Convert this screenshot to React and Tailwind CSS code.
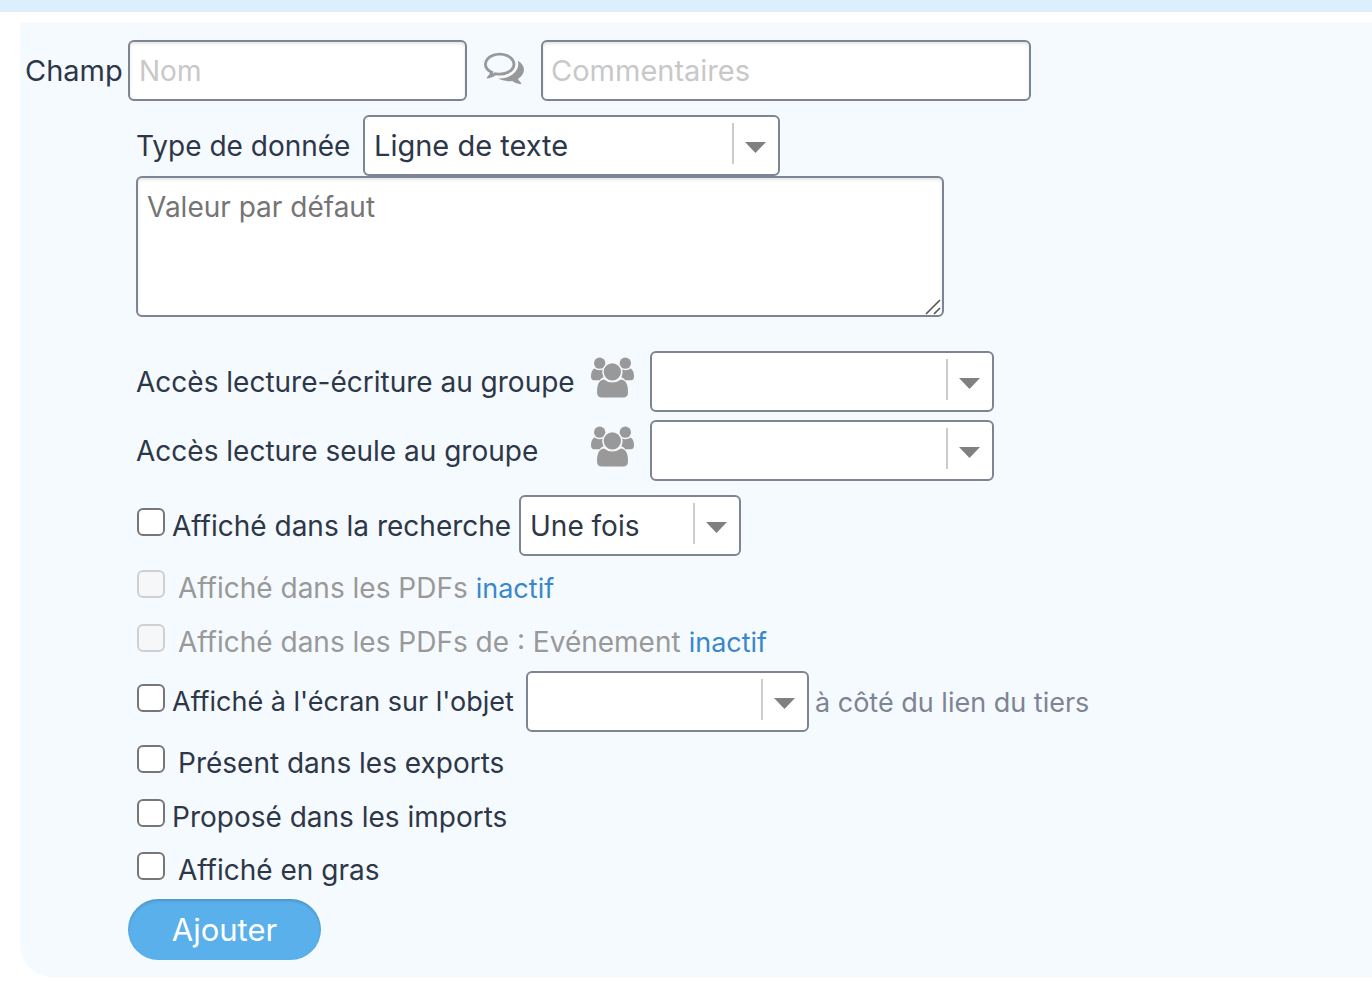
import React, { useState } from "react";

const FIELD = "border-2 border-[#7d8594] rounded-md bg-white text-[#2d3748] focus:outline-none";

function CommentsIcon() {
    return (
        <svg viewBox="0 0 1792 1792" className="w-10 h-10 mb-2 shrink-0" fill="#999999" aria-hidden="true">
            <path d="M704 384q-153 0-286 52t-211.5 141-78.5 191q0 82 53 158t149 132l97 56-35 84q34-20 62-39l44-31 53 10q78 14 153 14 153 0 286-52t211.5-141 78.5-191-78.5-191-211.5-141-286-52zm0-128q191 0 353.5 68.5t256.5 186.5 94 257-94 257-256.5 186.5-353.5 68.5q-86 0-176-16-124 88-278 128-36 9-86 16h-3q-11 0-20.5-8t-11.5-21q-1-3-1-6.5t.5-6.5 2-6l2.5-5 3.5-5.5 4-5 4.5-5 4-4.5q5-6 23-25t26-29.5 22.5-29 25-38.5 20.5-44q-124-72-195-177t-71-224q0-139 94-257t256.5-186.5 353.5-68.5zm822 1169q10 24 20.5 44t25 38.5 22.5 29 26 29.5 23 25q1 1 4 4.5t4.5 5 4 5 3.5 5.5l2.5 5t2 6 .5 6.5-1 6.5q-3 14-13 22t-22 7q-50-7-86-16-154-40-278-128-90 16-176 16-271 0-472-132 58 4 88 4 161 0 309-45t264-129q125-92 192-212t67-254q0-77-23-152 129 71 204 178t75 230q0 120-71 224.5t-195 176.5z" />
        </svg>
    );
}

function GroupIcon() {
    return (
        <svg viewBox="0 0 129 122" className="w-[43px] h-[41px] mb-2 shrink-0" fill="#999999" aria-hidden="true">
            <circle cx="26" cy="18" r="17" />
            <circle cx="103" cy="18" r="17" />
            <path d="M10 34Q17 39 26 39Q31 39 36 37Q32 47 38 60Q31 62 26 69H9Q0 69 0 58Q0 40 10 34Z" />
            <path d="M119 34Q112 39 103 39Q98 39 93 37Q97 47 91 60Q98 62 103 69H120Q129 69 129 58Q129 40 119 34Z" />
            <path d="M39 67Q50 76 64 76Q78 76 90 67Q103 68 108 82Q111 91 111 105Q111 121 96 121H33Q18 121 18 105Q18 91 21 82Q26 68 39 67Z" />
            <circle cx="64" cy="44" r="28" stroke="#f5fafe" strokeWidth="4" />
        </svg>
    );
}

function Select({ id, className, options = [""], ...props }) {
    return (
        <div className={`relative ${className}`}>
            <select id={id} className={`${FIELD} appearance-none w-full h-[61px] pl-[9px] pr-12`} {...props}>
                {options.map((option) => (
                    <option key={option}>{option}</option>
                ))}
            </select>
            <span className="absolute right-[46px] top-2 w-[2px] h-[41px] bg-[#cccccc] pointer-events-none" />
            <svg
                viewBox="0 0 22 11"
                className="absolute right-[13px] top-[27px] w-[22px] h-[11px] pointer-events-none"
                fill="#808080"
                aria-hidden="true"
            >
                <path d="M0 0H21L10.500 11Z" />
            </svg>
        </div>
    );
}

function Checkbox({ id, label, disabled = false, gap = "gap-[13px]", labelClass = "" }) {
    return (
        <div className={`flex items-center ${gap}`}>
            <input
                id={id}
                type="checkbox"
                disabled={disabled}
                className="appearance-none w-7 h-7 mb-2 shrink-0 rounded-md border-2 border-[#767676] bg-white checked:bg-[#5ab0ea] disabled:border-[#cfd0d1] disabled:bg-[#f6f7f9]"
            />
            <label htmlFor={id} className={`${labelClass} ${disabled ? "text-[#999999]" : ""}`}>
                {label}
            </label>
        </div>
    );
}

export default function App() {
    const [nom, setNom] = useState("");
    const [commentaires, setCommentaires] = useState("");

    return (
        <div className="bg-white min-h-screen font-['Inter',sans-serif] text-[28px] leading-[42px] text-[#2d3748] whitespace-nowrap">
            <div className="h-3 bg-[#dceffc]" />

            <form
                className="mt-[11px] ml-5 pt-[17px] pb-[17px] bg-[#f5fafe] rounded-bl-[32px]"
                onSubmit={(e) => e.preventDefault()}
            >
                <div className="flex items-center pl-[5px]">
                    <label htmlFor="nom" className="w-[103px] text-[29px]">Champ</label>
                    <input
                        id="nom"
                        type="text"
                        placeholder="Nom"
                        value={nom}
                        onChange={(e) => setNom(e.target.value)}
                        className={`${FIELD} w-[339px] h-[61px] px-[9px] placeholder:text-[#c8c8c8] shadow-[inset_0_2px_3px_#0000001a]`}
                    />
                    <div className="px-[17px]">
                        <CommentsIcon />
                    </div>
                    <input
                        type="text"
                        aria-label="Commentaires"
                        placeholder="Commentaires"
                        value={commentaires}
                        onChange={(e) => setCommentaires(e.target.value)}
                        className={`${FIELD} w-[490px] h-[61px] px-2 text-[29px] placeholder:text-[#c8c8c8] shadow-[inset_0_2px_3px_#0000001a]`}
                    />
                </div>

                <div className="pl-[116px]">
                    <div className="flex items-center mt-[14px]">
                        <label htmlFor="type" className="w-[227px]">Type de donnée</label>
                        <Select id="type" className="w-[417px] text-[29px]" options={["Ligne de texte"]} />
                    </div>

                    <div className="relative w-[808px]">
                        <textarea
                            aria-label="Valeur par défaut"
                            placeholder="Valeur par défaut"
                            className={`${FIELD} block w-full h-[141px] px-[9px] py-2 resize-none placeholder:text-[#757575] shadow-[inset_0_2px_3px_#0000001a]`}
                        />
                        <svg
                            viewBox="0 0 16 16"
                            className="absolute right-[3px] bottom-[2px] w-4 h-4 pointer-events-none"
                            stroke="#555555"
                            strokeWidth="1.6"
                            aria-hidden="true"
                        >
                            <path d="M1 15L15 1M9 15L15 9" />
                        </svg>
                    </div>

                    <div className="flex items-center mt-[34px]">
                        <label htmlFor="ecriture" className="w-[455px]">Accès lecture-écriture au groupe</label>
                        <GroupIcon />
                        <Select id="ecriture" className="w-[344px] ml-4" />
                    </div>
                    <div className="flex items-center mt-2">
                        <label htmlFor="lecture" className="w-[455px]">Accès lecture seule au groupe</label>
                        <GroupIcon />
                        <Select id="lecture" className="w-[344px] ml-4" />
                    </div>

                    <div className="flex items-center gap-[6px] mt-[14px] pl-px">
                        <Checkbox id="recherche" label="Affiché dans la recherche" gap="gap-[7px]" labelClass="w-[341px]" />
                        <Select className="w-[222px]" options={["Une fois"]} aria-label="Affichage dans la recherche" />
                    </div>

                    <div className="flex items-center gap-2 h-[54px] mt-[5px] pl-px">
                        <Checkbox id="pdf" label="Affiché dans les PDFs" disabled />
                        <a href="#pdf" className="pt-[2px] text-[27px] text-[#3a87cc]">inactif</a>
                    </div>
                    <div className="flex items-center gap-2 h-[54px] pl-px">
                        <Checkbox id="pdf-evenement" label="Affiché dans les PDFs de : Evénement" disabled />
                        <a href="#pdf-evenement" className="pt-[2px] text-[27px] text-[#3a87cc]">inactif</a>
                    </div>

                    <div className="flex items-center gap-[6px] mt-[2px] pl-px">
                        <Checkbox
                            id="ecran"
                            label="Affiché à l'écran sur l'objet"
                            gap="gap-[7px]"
                            labelClass="w-[348px] text-[27px]"
                        />
                        <Select className="w-[283px]" aria-label="Objet" />
                        <span className="pt-[2px] text-[27px] text-[#7d8594]">à côté du lien du tiers</span>
                    </div>

                    <div className="flex items-center h-[54px] mt-1 pl-px">
                        <Checkbox id="exports" label="Présent dans les exports" />
                    </div>
                    <div className="flex items-center h-[53px] pl-px">
                        <Checkbox id="imports" label="Proposé dans les imports" gap="gap-[7px]" />
                    </div>
                    <div className="flex items-center h-[54px] pl-px">
                        <Checkbox id="gras" label="Affiché en gras" />
                    </div>
                </div>

                <button
                    type="submit"
                    className="block w-[193px] h-[61px] mt-[2px] ml-[108px] rounded-full bg-[#5ab0ea] text-[31px] text-white shadow-[inset_0_2px_3px_#00000026]"
                >
                    Ajouter
                </button>
            </form>
        </div>
    );
}
